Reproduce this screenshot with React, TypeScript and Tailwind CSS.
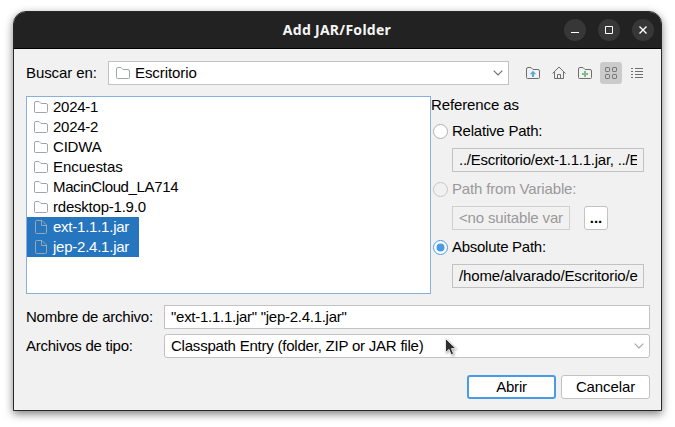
import React from "react";

const FOLDER = "M.5 10.5V2Q.5 .5 2 .5H5L7 2.5H12Q13.5 2.5 13.5 4V10.5Q13.5 11.5 12.5 11.5H1.5Q.5 11.5 .5 10.5Z";

function Folder({ color = "#9aa7b0", children }: { color?: string; children?: React.ReactNode }) {
  return (
    <svg width="14" height="12" viewBox="0 0 14 12" fill="none" className="shrink-0">
      <path d={FOLDER} stroke={color} />
      {children}
    </svg>
  );
}

function FileIcon() {
  return (
    <svg width="12" height="14" viewBox="0 0 12 14" fill="none" stroke="#9aa7b0" className="ml-px mr-px shrink-0">
      <path d="M1.5 .5H7L11.5 5V12.5Q11.5 13.5 10.5 13.5H1.5Q.5 13.5 .5 12.5V1.5Q.5 .5 1.5 .5ZM6.5 .5V5.5H11.5" />
    </svg>
  );
}

function Chevron({ color }: { color: string }) {
  return (
    <svg width="10" height="6" viewBox="0 0 10 6" fill="none" className="shrink-0">
      <path d="M.7 .7L5 5L9.3 .7" stroke={color} strokeWidth="1.1" />
    </svg>
  );
}

function Radio({ checked, disabled }: { checked?: boolean; disabled?: boolean }) {
  const stroke = checked ? "#4a9ae6" : disabled ? "#c6c6c6" : "#b0b0b0";
  return (
    <svg width="15" height="15" viewBox="0 0 15 15" className="shrink-0">
      <circle cx="7.5" cy="7.5" r="7" fill={disabled ? "#f1f1f1" : "#fff"} stroke={stroke} />
      {checked && <circle cx="7.5" cy="7.5" r="4" fill="#4a9ae6" />}
    </svg>
  );
}

function TitleButton({ children }: { children: React.ReactNode }) {
  return (
    <button className="flex h-[22px] w-[22px] items-center justify-center rounded-full bg-[#373737]">
      <svg width="10" height="10" viewBox="0 0 10 10" fill="none" stroke="#fff">{children}</svg>
    </button>
  );
}

const folders = [
  { name: "2024-1", tracking: "tracking-[-0.25px]" },
  { name: "2024-2", tracking: "tracking-[-0.25px]" },
  { name: "CIDWA", tracking: "tracking-[-0.2px]" },
  { name: "Encuestas", tracking: "tracking-[-0.03px]" },
  { name: "MacinCloud_LA714", tracking: "tracking-[-0.36px]" },
  { name: "rdesktop-1.9.0", tracking: "tracking-[-0.22px]" },
];
const jars = ["ext-1.1.1.jar", "jep-2.4.1.jar"];

export default function App() {
  return (
    <div className="relative h-[427px] w-[675px] overflow-hidden bg-white pl-[13px] pt-[11px] font-['Liberation_Sans',Arial,sans-serif] text-[15px] leading-5 whitespace-nowrap text-black">
      <div className="flex h-[400px] w-[649px] flex-col overflow-hidden rounded-t-[13px] border border-[#29272a] bg-[#f1f1f1] shadow-[0_3px_9px_0px_rgba(0,0,0,0.5)]">
        <header className="flex h-[37px] shrink-0 items-center border-b border-black bg-[#222] pr-[7px]">
          <div className="w-[110px]" />
          <h1 className="flex-1 pr-[14px] text-center font-['Noto_Sans',sans-serif] text-[14px] font-bold tracking-[0.28px] text-[#f5f5f5]">Add JAR/Folder</h1>
          <div className="flex gap-3">
            <TitleButton><path d="M1 7.5H9" /></TitleButton>
            <TitleButton><path d="M1.5 1.5H8.5V8.5H1.5Z" /></TitleButton>
            <TitleButton><path d="M1.5 1.5L8.5 8.5M8.5 1.5L1.5 8.5" strokeWidth="1.4" /></TitleButton>
          </div>
        </header>

        <div className="flex flex-1 flex-col pl-3 pr-[11px] pt-3">
          <div className="flex h-6 items-center">
            <span className="w-[82px] tracking-[-0.1px]">Buscar en:</span>
            <div className="flex h-6 w-[401px] items-center border border-[#c2c2c2] bg-white pl-[7px] pr-[5px]">
              <Folder />
              <span className="ml-[5px] flex-1 tracking-[-0.08px]">Escritorio</span>
              <Chevron color="#6e6e6e" />
            </div>
            <div className="ml-[13px] flex items-center gap-1">
              <button className="flex h-[22px] w-[22px] items-center justify-center">
                <Folder color="#6e6e6e"><path d="M7 3.8L10.2 7.2H8V10H6V7.2H3.8Z" fill="#389fd6" opacity=".85" /></Folder>
              </button>
              <button className="flex h-[22px] w-[22px] items-center justify-center">
                <svg width="14" height="14" viewBox="0 0 14 14" fill="none" stroke="#6e6e6e">
                  <path d="M.5 7.5L7 1L13.5 7.5M2.5 5.8V12.5H11.5V5.8M5.5 12.5V8.5H8.5V12.5" />
                </svg>
              </button>
              <button className="flex h-[22px] w-[22px] items-center justify-center">
                <Folder color="#6e6e6e"><path d="M7 4V10M4 7H10" stroke="#59a869" strokeWidth="2" opacity=".75" /></Folder>
              </button>
              <button className="flex h-[22px] w-[22px] items-center justify-center rounded-[3px] bg-[#cbcbcb]">
                <svg width="12" height="12" viewBox="0 0 12 12" fill="none" stroke="#6e6e6e">
                  <rect x=".5" y=".5" width="4" height="4" rx=".8" />
                  <rect x="7.5" y=".5" width="4" height="4" rx=".8" />
                  <rect x=".5" y="7.5" width="4" height="4" rx=".8" />
                  <rect x="7.5" y="7.5" width="4" height="4" rx=".8" />
                </svg>
              </button>
              <button className="flex h-[22px] w-[22px] items-center justify-center">
                <svg width="12" height="10" viewBox="0 0 12 10" stroke="#6e6e6e">
                  <path d="M0 .5H2M4 .5H12M0 3.5H2M4 3.5H12M0 6.5H2M4 6.5H12M0 9.5H2M4 9.5H12" />
                </svg>
              </button>
            </div>
          </div>

          <div className="mt-[11px] flex h-[198px]">
            <div className="w-[405px] border border-[#89b0d8] bg-white">
              {folders.map(({ name, tracking }) => (
                <div key={name} className="flex h-5 items-center gap-[5px] pl-[7px]"><Folder /><span className={tracking}>{name}</span></div>
              ))}
              {jars.map((name) => (
                <div key={name} className="flex h-5 w-28 items-center gap-[5px] bg-[#2675bf] pl-[7px] text-white"><FileIcon /><span className="tracking-[-0.24px]">{name}</span></div>
              ))}
            </div>
            <div className="w-[219px]">
              <div className="h-[18px] leading-[18px] tracking-[-0.12px]">Reference as</div>
              <label className="flex h-[34px] items-center gap-1 pl-[2px] tracking-[-0.22px]"><Radio />Relative Path:</label>
              <div className="ml-[21px] h-6 w-48 border border-[#c2c2c2] px-[6px]">
                <div className="overflow-hidden leading-[22px] tracking-[-0.25px]">../Escritorio/ext-1.1.1.jar, ../E</div>
              </div>
              <label className="flex h-[34px] items-center gap-1 pl-[2px] tracking-[-0.16px] text-[#999]"><Radio disabled />Path from Variable:</label>
              <div className="flex pl-[21px] text-[#999]">
                <div className="h-6 w-[118px] border border-[#cfcfcf] px-[6px]">
                  <div className="leading-[22px] tracking-[-0.15px]">&lt;no suitable var</div>
                </div>
                <button className="ml-[14px] h-6 w-6 rounded-[3px] border border-[#c2c2c2] bg-white leading-[20px] font-bold text-black">...</button>
              </div>
              <label className="flex h-[34px] items-center gap-1 pl-[2px] tracking-[-0.27px]"><Radio checked />Absolute Path:</label>
              <div className="ml-[21px] h-6 w-48 border border-[#c2c2c2] px-[6px]">
                <div className="leading-[22px] tracking-[-0.14px]">/home/alvarado/Escritorio/e</div>
              </div>
            </div>
          </div>

          <div className="mt-[11px] flex h-6 items-center">
            <span className="w-[138px] tracking-[-0.22px]">Nombre de archivo:</span>
            <div className="h-6 flex-1 border border-[#c2c2c2] bg-white pl-[6px] leading-[22px] tracking-[-0.27px]">"ext-1.1.1.jar" "jep-2.4.1.jar"</div>
          </div>
          <div className="mt-[5px] flex h-6 items-center">
            <span className="w-[138px] tracking-[-0.25px]">Archivos de tipo:</span>
            <div className="flex h-6 flex-1 items-center justify-between rounded-[3px] border border-[#c2c2c2] bg-white pl-[6px] pr-[5px]">
              <span className="tracking-[-0.22px]">Classpath Entry (folder, ZIP or JAR file)</span>
              <Chevron color="#a6a6a6" />
            </div>
          </div>
          <div className="mt-[17px] flex justify-end gap-[5px]">
            <button className="h-6 w-[89px] rounded-[3px] border-2 border-[#4a9ae6] bg-white leading-5 tracking-[-0.2px]">Abrir</button>
            <button className="h-6 w-[89px] rounded-[3px] border border-[#c2c2c2] bg-white leading-[22px] tracking-[-0.1px]">Cancelar</button>
          </div>
        </div>
      </div>
      <svg className="absolute left-[444px] top-[337px] drop-shadow-[1px_1px_1px_rgba(0,0,0,0.35)]" width="14" height="21" viewBox="0 0 14 21">
        <path d="M1.5 1.5V15.5L5 12.4L7.2 17.8L9.6 16.8L7.4 11.6H11.8Z" fill="#2e2e2e" stroke="#fff" strokeWidth=".8" />
      </svg>
    </div>
  );
}
